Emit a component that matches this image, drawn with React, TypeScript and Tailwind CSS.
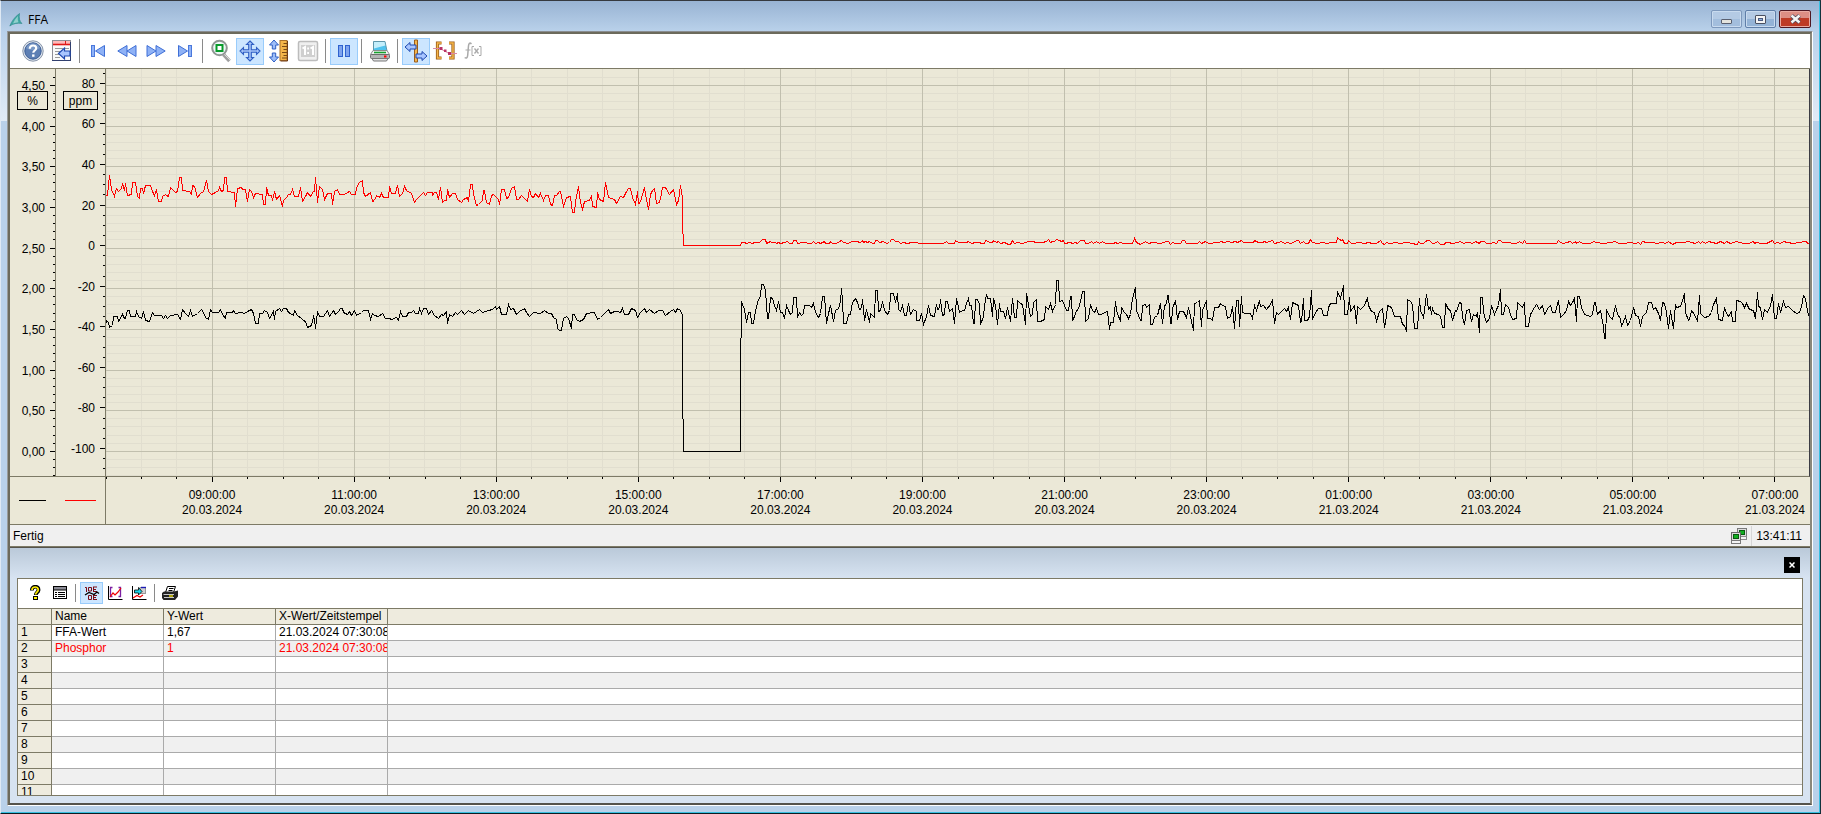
import React from "react";

/* ---------- trend data ---------- */

type Block = { x: number; y: number; sx: number; pts: string };

const toPoints = (blocks: Block[]) =>
  blocks
    .flatMap((b) =>
      b.pts
        .trim()
        .split(/\s+/)
        .map((p) => {
          const [px, py] = p.split(",").map(Number);
          return `${Math.floor(b.x + px / b.sx) + 0.5},${Math.floor(b.y + py / 3) + 0.5}`;
        }),
    )
    .join(" ");

const phosphor = toPoints([
  {
    x: -16,
    y: 81,
    sx: 2.528,
    pts: `40,136 45,136 50,75 54,118 61,139 64,124 68,115 72,124 80,115 83,100 87,121 91,100 95,136 104,132 107,97 115,97 119,139 124,145 128,115 132,115 136,130 141,106 153,106 157,124 164,136 169,118 174,154 180,154 184,139 190,133 193,136 199,139 203,112 208,118 215,127 222,124 227,82 232,82 234,121 251,124 256,133 260,106 264,108 273,142 279,131 287,124 295,91 300,124 308,133 318,127 325,121 328,112 332,124 337,121 340,82 345,82 347,124 365,127 369,170 373,115 382,112 385,118 393,118 397,154 402,118 408,124 414,142 418,130 436,133 439,163 443,163 447,112 452,136 458,136 462,151 467,124 472,148 480,136 486,170 490,151 498,142 503,133 508,133 513,118 518,139 528,139 533,112 538,154 546,139 550,127 557,139 564,124 567,124 570,82 576,157 581,109 589,118 593,148 600,130 610,130 614,163 618,124 626,118 631,133 643,133 656,124 661,133 670,133 674,112 681,97 688,91 691,127 697,139 708,127 713,154 720,151 725,136 733,142 738,130 742,142 754,142 758,109 762,130 773,130 778,106 783,139 790,130 795,109 800,121 812,130 821,157 826,148 842,127 847,136 854,127 865,127 867,136 871,127 876,127 880,148 886,112 891,157 896,151 901,151 905,118 909,142 916,130 925,130 930,148 938,157 945,148 955,142 958,154 963,103 967,103 970,133 976,166 983,163 992,151 995,121 998,121 1002,157 1009,163 1014,136 1021,133 1032,148 1036,163 1041,118 1049,118 1053,145 1058,142 1065,115 1073,109 1077,148 1084,148 1092,136 1105,154 1110,118 1115,139 1122,142 1126,130 1134,142 1138,130 1146,151 1151,136 1158,136 1164,163 1170,166 1174,136 1180,136 1186,124 1190,124 1197,169 1205,142 1215,139 1219,187 1225,187 1228,154 1235,109 1240,157 1246,178 1251,154 1262,151 1267,136 1271,169 1280,172 1284,127 1289,148 1299,154 1304,97 1311,142 1325,148 1332,160 1342,139 1348,142 1355,130 1362,115 1367,115 1372,142 1378,163 1383,124 1387,160 1391,157 1397,133 1403,112 1407,148 1411,178 1416,133 1423,121 1428,115 1433,160 1440,157 1446,130 1448,112 1456,112 1465,133 1475,118 1482,163 1487,151 1492,106 1497,145 1499,215`,
  },
  {
    x: 564,
    y: 111,
    sx: 3,
    pts: `40,196 211,196 214,187 224,187 230,190 238,187 246,190 252,187 268,186 276,178 287,178 290,190 300,184 305,187 316,187 320,190 326,187 330,190 344,187 352,184 358,190 368,190 371,181 379,181 383,190 396,187 423,190 429,184 435,190 445,187 452,190 462,184 466,190 477,190 482,184 486,190 500,190 515,181 520,187 535,190 545,184 563,184 567,187 572,187 576,181 580,187 586,184 592,187 598,184 606,190 614,190 617,181 622,181 627,187 640,184 648,190 658,187 663,178 671,178 676,184 684,184 690,190 700,187 712,190 725,187 740,187 748,190 760,189 775,190 820,190 829,184 834,190 852,190 857,181 864,187 890,187 896,184 903,189 915,187 927,187 935,190 943,190 947,181 960,186 967,186 971,181 978,187 985,184 990,190 1002,187 1014,192 1020,193 1026,181 1032,190 1042,187 1056,190 1076,184 1086,184 1100,187 1118,187 1128,184 1136,178 1142,187 1147,184 1154,184 1160,178 1168,181 1173,184 1179,181 1184,190`,
  },
  {
    x: 954,
    y: 151,
    sx: 3,
    pts: `30,66 36,70 45,66 52,70 60,61 72,61 76,69 86,70 93,64 100,69 110,64 118,69 126,64 136,70 160,70 166,66 172,70 180,67 190,70 214,70 219,66 224,56 229,68 240,72 257,64 264,69 276,67 300,69 320,65 325,64 331,73 338,66 345,70 362,69 366,61 372,61 378,70 413,70 417,64 424,70 430,68 436,64 444,70 474,68 484,65 490,67 505,64 515,68 525,65 532,68 543,61 550,67 580,67 584,61 594,66 606,66 612,63 620,67 636,61 642,69 654,66 665,64 674,70 682,67 690,70 700,66 708,61 716,62 722,69 730,64 736,70 746,70 752,58 758,67 772,70 790,66 800,69 815,67 828,66 833,52 838,57 843,62 848,58 854,70 862,70 866,62 874,70 886,70 890,66 896,68 912,70 925,66 938,69 950,69 960,61 968,70 974,73 980,67 988,70 1010,66 1018,69 1040,67 1060,70 1066,73 1071,73 1076,64 1082,69 1090,70 1096,64 1102,61 1109,61`,
  },
  {
    x: 1324,
    y: 151,
    sx: 3,
    pts: `0,64 6,69 14,69 22,64 32,72 42,73 46,68 56,66 68,69 82,67 92,64 100,70 110,66 118,66 126,70 136,65 148,70 152,64 164,64 170,70 182,70 190,66 198,70 206,62 211,62 216,67 225,68 260,70 268,65 276,69 282,61 288,70 380,69 385,61 392,66 400,70 410,67 420,65 428,69 435,64 440,69 448,64 458,70 480,70 490,65 500,67 520,70 540,67 555,64 565,69 580,70 600,67 615,70 625,66 630,73 636,64 650,68 670,66 680,69 698,66 706,70 715,65 728,73 740,68 760,66 775,64 785,67 796,70 806,64 812,70 818,64 826,70 836,64 848,68 858,70 872,64 882,70 890,64 900,70 920,65 940,69 955,70 970,64 974,70 980,66 994,69 1010,70 1026,61 1034,70 1042,66 1050,70 1060,64 1072,66 1090,70 1104,66 1128,64 1133,69 1138,69`,
  },
]);

const ffa = toPoints([
  {
    x: -16,
    y: 81,
    sx: 2.528,
    pts: `40,524 42,511 46,518 50,533 56,527 60,499 69,499 73,514 82,493 87,505 91,505 95,481 99,481 103,499 114,499 118,484 122,499 130,505 136,484 140,511 151,514 158,488 162,496 180,496 186,505 192,497 197,505 203,497 222,493 230,508 235,478 241,490 250,499 255,481 260,499 272,490 281,478 287,487 293,502 300,508 305,478 310,487 325,487 329,478 334,493 342,505 346,487 360,487 364,481 369,490 382,488 391,490 398,484 409,478 413,490 418,520 425,520 429,490 436,490 441,481 448,488 455,505 463,484 467,508 470,484 480,475 484,484 490,476 497,476 502,487 508,490 514,496 518,481 524,496 534,505 540,511 546,514 550,532 561,526 564,499 568,508 571,535 575,484 580,499 590,499 600,481 606,499 615,481 620,493 628,484 632,475 638,475 641,487 651,493 657,484 662,496 668,481 674,496 686,487 691,481 704,481 708,508 713,490 718,496 730,499 740,490 746,505 758,505 763,508 775,502 780,511 784,484 789,499 800,499 804,487 812,488 817,481 823,490 830,490 833,475 839,490 844,475 851,475 855,493 863,481 872,496 882,505 888,494 894,497 901,485 905,520 909,493 916,500 925,487 930,493 940,481 946,493 956,482 970,490 985,478 992,487 1008,481 1018,478 1024,469 1028,478 1036,469 1040,493 1054,493 1059,463 1064,478 1070,475 1078,493 1086,484 1098,475 1103,487 1110,499 1122,487 1140,490 1150,481 1158,490 1166,490 1172,502 1179,508 1183,535 1188,541 1193,541 1197,505 1204,499 1210,505 1216,535 1220,493 1226,493 1230,508 1238,514 1248,508 1254,490 1275,487 1284,508 1290,502 1300,490 1312,478 1317,490 1325,484 1334,484 1340,487 1345,475 1352,493 1362,493 1370,475 1378,481 1384,502 1392,487 1402,475 1408,487 1415,478 1428,490 1436,481 1448,481 1454,496`,
  },
  {
    x: 564,
    y: 111,
    sx: 3,
    pts: `0,394 10,388 16,396 22,386 30,392 37,405 38,610 40,814 211,814 212,588 214,365 218,374 223,388 230,428 234,398 241,398 245,430 250,430 256,390 264,358 270,349 275,313 280,313 285,332 291,415 294,415 301,352 306,356 314,376 320,390 326,364 332,396 338,398 344,415 350,376 356,390 362,403 368,396 371,352 379,352 383,411 388,398 394,406 400,400 404,377 418,377 424,382 429,370 436,396 444,412 452,400 458,349 463,349 468,431 475,400 482,376 489,425 495,390 504,384 510,364 515,325 518,360 521,430 530,430 534,404 541,402 546,366 556,355 561,366 568,388 573,386 576,358 582,422 588,388 598,428 602,400 612,412 617,331 621,331 625,394 631,390 636,364 642,390 652,403 658,390 662,341 670,341 675,366 681,341 686,388 690,393 696,376 702,406 710,406 714,370 720,404 730,388 738,394 740,421 748,421 753,400 759,434 768,410 774,376 780,406 792,409 798,374 803,388 808,386 812,358 818,406 823,402 826,364 832,364 838,394 846,386 852,431 858,355 864,380 868,396 876,390 884,390 890,370 894,355 898,376 904,376 909,430 913,430 916,358 922,358 928,374 932,433 940,408 944,376 948,343 953,355 960,355 966,410 971,355 976,376 981,433 988,370 992,394 1000,394 1005,415 1011,382 1020,425 1026,355 1032,412 1038,412 1043,360 1050,370 1058,374 1065,433 1070,341 1080,409 1086,402 1090,366 1099,358 1103,424 1112,424 1122,418 1127,379 1134,388 1142,370 1148,394 1156,372 1160,301 1165,301 1169,365 1177,361 1182,376 1190,392 1196,390`,
  },
  {
    x: 954,
    y: 151,
    sx: 3,
    pts: `30,230 34,230 38,300 44,290 50,272 56,268 61,245 68,214 73,214 77,304 86,296 92,254 96,272 102,278 108,264 114,284 124,284 132,276 142,274 148,328 152,308 160,306 165,244 170,272 180,304 185,262 192,278 200,284 206,296 212,284 218,235 225,202 230,272 240,300 244,300 248,256 256,252 260,262 268,254 272,313 277,313 283,292 292,286 300,250 306,310 312,256 318,252 321,226 326,226 330,310 334,310 338,266 345,240 352,298 358,274 370,274 378,292 384,262 392,290 399,331 404,250 412,248 418,242 423,319 428,270 438,242 442,295 452,296 457,301 462,262 474,262 480,250 486,256 496,260 502,295 510,290 516,258 522,325 528,242 535,242 538,320 543,230 548,276 556,279 570,279 576,295 582,256 590,272 597,242 602,260 610,256 618,268 630,254 636,238 642,310 648,276 656,284 672,266 678,274 684,262 690,298 697,246 708,252 715,256 720,307 724,305 729,236 734,301 742,300 748,290 753,212 758,298 766,278 774,266 784,266 790,286 802,286 806,262 812,250 828,250 833,214 842,235 849,196 854,283 862,283 867,233 872,274 882,256 888,310 893,260 900,268 908,262 914,256 921,232 926,256 934,274 942,276 950,304 958,274 968,264 973,322 978,290 981,256 994,262 1004,290 1020,288 1026,314 1033,316 1038,334 1043,238 1050,244 1058,254 1063,325 1072,325 1077,236 1082,270 1090,292 1098,223 1104,268`,
  },
  {
    x: 1324,
    y: 151,
    sx: 3,
    pts: `0,260 4,284 8,266 14,280 24,282 30,290 36,322 43,322 47,250 54,268 62,272 68,300 75,272 80,274 87,247 94,250 98,292 103,313 108,270 117,268 123,304 130,283 138,290 143,278 148,337 152,232 157,232 160,278 168,306 178,296 185,256 192,282 200,268 205,256 210,208 215,284 220,284 225,254 234,262 240,284 248,299 258,296 263,247 270,256 278,262 282,247 287,319 295,319 300,284 312,262 318,254 328,268 337,256 344,284 356,262 362,256 368,276 376,276 384,241 392,292 400,284 410,272 414,244 420,256 428,248 433,236 438,304 442,230 448,230 453,262 464,284 480,290 486,284 492,247 497,247 502,284 512,272 520,320 523,355 526,355 530,268 538,290 548,298 555,256 562,284 570,296 574,319 580,304 586,290 592,316 600,300 611,262 617,286 624,290 630,319 636,290 650,278 656,248 664,248 670,268 676,262 684,280 691,300 697,247 702,250 708,276 715,325 722,270 729,325 735,254 740,262 750,258 756,240 762,220 767,276 774,300 779,298 785,272 793,284 802,304 807,226 812,280 822,292 834,290 844,278 850,254 858,236 864,298 876,300 882,262 890,280 896,290 904,274 908,304 916,304 920,242 930,244 936,250 942,262 948,250 958,268 970,272 976,295 981,217 986,260 992,262 998,298 1004,268 1012,276 1020,256 1026,224 1034,295 1040,295 1046,250 1052,278 1059,244 1066,262 1076,260 1088,270 1098,280 1108,278 1114,258 1120,226 1126,235 1131,272 1136,286 1140,286`,
  },
]);

/* ---------- scales ---------- */

const PLOT_W = 1703;
const PLOT_H = 407;

const pct = (h: number) => `${(Math.max(h * 71 - 0.5, 0.5) / PLOT_W) * 100}%`;
const yPercent = (v: number) => Math.floor(382.4 - v * 81.34) + 0.5;
const yPpm = (v: number) => Math.floor(176.6 - v * 2.029) + 0.5;

const range = (n: number) => Array.from({ length: n }, (_, i) => i);
const percentTicks = range(50).map((i) => ({ y: yPercent((i - 3) / 10), major: (i - 3) % 5 === 0, v: (i - 3) / 10 }));
const ppmTicks = range(41).map((i) => ({ y: yPpm(i * 5 - 115), major: (i * 5 - 115) % 20 === 0, v: i * 5 - 115 }));
const hourTicks = range(48).map((i) => ({ h: i / 2, major: i % 4 === 3 }));

const xLabels = [
  ["09:00:00", "20.03.2024"],
  ["11:00:00", "20.03.2024"],
  ["13:00:00", "20.03.2024"],
  ["15:00:00", "20.03.2024"],
  ["17:00:00", "20.03.2024"],
  ["19:00:00", "20.03.2024"],
  ["21:00:00", "20.03.2024"],
  ["23:00:00", "20.03.2024"],
  ["01:00:00", "21.03.2024"],
  ["03:00:00", "21.03.2024"],
  ["05:00:00", "21.03.2024"],
  ["07:00:00", "21.03.2024"],
];

function Trend() {
  return (
    <div className="grid shrink-0 grid-cols-[46px_50px_minmax(0,1fr)] grid-rows-[408px_48px] bg-[#ebe8d7] text-xs">
      <svg className="block h-[408px] w-full border-r border-b border-[#7d7a66]" fontSize={12}>
        {percentTicks
          .filter((t) => t.y > 0 && t.y < PLOT_H)
          .map((t) => (
            <g key={t.v}>
              <line x1={t.major ? 40 : 43} x2={46} y1={t.y} y2={t.y} stroke="#000" shapeRendering="crispEdges" />
              {t.major && (
                <text x={35} y={t.y + 4} textAnchor="end">
                  {t.v.toFixed(2).replace(".", ",")}
                </text>
              )}
            </g>
          ))}
        <rect x={7.5} y={22.5} width={30} height={18} fill="#ebe8d7" stroke="#000" />
        <text x={22.5} y={36} textAnchor="middle">%</text>
      </svg>
      <svg className="block h-[408px] w-full border-r border-b border-[#7d7a66]" fontSize={12}>
        {ppmTicks
          .filter((t) => t.y > 0 && t.y < PLOT_H)
          .map((t) => (
            <g key={t.v}>
              <line x1={t.major ? 44 : 47} x2={50} y1={t.y} y2={t.y} stroke="#000" shapeRendering="crispEdges" />
              {t.major && (
                <text x={39} y={t.y + 4} textAnchor="end">
                  {t.v}
                </text>
              )}
            </g>
          ))}
        <rect x={7.5} y={22.5} width={34} height={18} fill="#ebe8d7" stroke="#000" />
        <text x={24.5} y={36} textAnchor="middle">ppm</text>
      </svg>
      <div className="border-r border-b border-r-[#3c3c44] border-b-[#7d7a66]">
        <svg className="block h-[407px] w-full" shapeRendering="crispEdges">
          {percentTicks.filter((t) => !t.major).map((t) => (
            <line key={t.v} x1="0" x2="100%" y1={t.y} y2={t.y} stroke="#e1decf" />
          ))}
          {hourTicks.filter((t) => !t.major).map((t) => (
            <line key={t.h} x1={pct(t.h)} x2={pct(t.h)} y1="0" y2="100%" stroke="#e1decf" />
          ))}
          {percentTicks.filter((t) => t.major).map((t) => (
            <line key={t.v} x1="0" x2="100%" y1={t.y} y2={t.y} stroke="#c1bfae" />
          ))}
          {hourTicks.filter((t) => t.major).map((t) => (
            <line key={t.h} x1={pct(t.h)} x2={pct(t.h)} y1="0" y2="100%" stroke="#c1bfae" />
          ))}
          <svg width="100%" height="100%" viewBox={`0 0 ${PLOT_W} ${PLOT_H}`} preserveAspectRatio="none">
            <polyline points={ffa} fill="none" stroke="#000" vectorEffect="non-scaling-stroke" />
            <polyline points={phosphor} fill="none" stroke="#f00" vectorEffect="non-scaling-stroke" />
          </svg>
        </svg>
      </div>
      <div className="col-span-2 flex items-center gap-[19px] border-r border-b border-[#7d7a66] pl-[9px]">
        <span className="h-px w-[27px] bg-black" />
        <span className="h-px w-[31px] bg-[#f00]" />
      </div>
      <svg className="block h-12 w-full border-b border-[#7d7a66]" fontSize={12}>
        {hourTicks.map((t) => (
          <line key={t.h} x1={pct(t.h)} x2={pct(t.h)} y1={0} y2={t.major ? 5 : 2} stroke="#000" shapeRendering="crispEdges" />
        ))}
        {xLabels.map(([time, date], i) => (
          <g key={i} textAnchor="middle">
            <text x={pct(1.5 + i * 2)} y={22}>{time}</text>
            <text x={pct(1.5 + i * 2)} y={37}>{date}</text>
          </g>
        ))}
      </svg>
    </div>
  );
}

/* ---------- toolbar icons ---------- */

const Ico = ({ children, s = 24 }: { children: React.ReactNode; s?: number }) => (
  <svg width={s} height={s} viewBox={`0 0 ${s} ${s}`} className="shrink-0" fill="none" aria-hidden="true">
    {children}
  </svg>
);

const BLUE = "#2f5fc4";
const LIGHT = "#8fb2f6";

const HelpIcon = () => (
  <Ico>
    <circle cx="12" cy="12" r="10.2" fill="#e4e9f0" stroke="#8593a8" />
    <circle cx="12" cy="12" r="8.2" fill="#5d7fb4" stroke="#3a5c94" />
    <path d="M5 9a7.5 7.5 0 0 1 14 0c-4 3-9 3-14 0z" fill="#86a2cd" opacity=".7" />
    <path d="M8.8 9.8c0-4.4 6.6-4.2 6.4-.6-.1 2.3-2.9 2.3-2.9 4.600" stroke="#fff" strokeWidth="2.2" />
    <rect x="11.1" y="15.4" width="2.4" height="2.4" fill="#fff" />
  </Ico>
);
const ConfigIcon = () => (
  <Ico>
    <rect x="2.5" y="1.5" width="18" height="20" fill="#fafafa" stroke="#8d8d96" />
    <path d="M2 21.5h19M20.5 3v18" stroke="#32406e" />
    <rect x="3" y="2" width="17" height="4" fill="#ffb9b9" />
    <path d="M3 5.500h17" stroke="#e01818" strokeWidth="1.6" />
    <path d="M15.500 2v3" stroke="#e01818" />
    <path d="M5 9.500h8M5 12.500h5M5 15.500h4M5 18.500h5M15 9.500h4" stroke="#9a9a9a" />
    <path d="M8.500 14.500l6-5.500v3h5.500v5h-5.500v3z" fill="#a9c6ff" stroke="#1f49b0" strokeWidth="1.2" />
  </Ico>
);
const FirstIcon = () => (
  <Ico>
    <rect x="5.5" y="6.5" width="3" height="11" fill={LIGHT} stroke="#4a78dc" />
    <path d="M18.5 6.5v11L9.5 12z" fill={LIGHT} stroke="#3f6fd6" />
  </Ico>
);
const BackIcon = () => (
  <Ico>
    <path d="M12 6.5v11L2.8 12zM21 6.5v11L12 12z" fill={LIGHT} stroke="#3f6fd6" />
  </Ico>
);
const ForwardIcon = () => (
  <Ico>
    <path d="M3 6.5v11L12 12zM12 6.5v11L21.2 12z" fill={LIGHT} stroke="#3f6fd6" />
  </Ico>
);
const LastIcon = () => (
  <Ico>
    <rect x="15.5" y="6.5" width="3" height="11" fill={LIGHT} stroke="#4a78dc" />
    <path d="M5.5 6.5v11L14.5 12z" fill={LIGHT} stroke="#3f6fd6" />
  </Ico>
);
const ZoomIcon = () => (
  <Ico>
    <path d="M14.5 15.5l6 6.5" stroke="#a0a0a0" strokeWidth="3.5" />
    <path d="M15 15l6 6" stroke="#dcdcdc" strokeWidth="1" />
    <circle cx="10.5" cy="9" r="7.3" fill="#eef8f6" stroke="#8f9694" strokeWidth="2" />
    <rect x="7.5" y="6" width="6" height="6" fill="#fff" stroke="#079a2b" strokeWidth="2" />
  </Ico>
);
const MoveIcon = () => (
  <Ico>
    <path
      d="M12 2l3.500 3.500h-2.200v5.200h5.200V8.500L22 12l-3.500 3.500v-2.200h-5.200v5.200h2.200L12 22l-3.500-3.500h2.200v-5.200H5.500v2.200L2 12l3.500-3.500v2.200h5.200V5.500H8.500z"
      fill="#a7c5f8"
      stroke={BLUE}
      strokeWidth="1.1"
    />
  </Ico>
);
const ScaleIcon = () => (
  <Ico>
    <path d="M7 1l4.500 5H8.700v4H5.300V6H2.500zM7 23L2.500 18h2.800v-4h3.400v4h2.800z" fill="#9dbdf8" stroke={BLUE} />
    <rect x="13" y="1.5" width="7" height="20" fill="#f4b54a" stroke="#a9702a" />
    <path d="M20.500 2v20H13.500" stroke="#6e3a14" />
    <path d="M16.500 4.500h4M15 7.500h5M16.500 10.500h4M15 13.500h5M16.500 16.500h4M15 19h5" stroke="#7a4a16" />
  </Ico>
);
const OneToOneIcon = () => (
  <Ico>
    <rect x="2.500" y="2.500" width="19" height="19" rx="1.500" fill="#efefef" stroke="#bcbcbc" strokeWidth="1.500" />
    <rect x="5" y="6" width="14" height="12" fill="#cfcfcf" />
    <path d="M6.500 9.500L9 8v8M14.500 9.500L17 8v8" stroke="#fff" strokeWidth="2" />
    <path d="M11.200 9.500h1.800M11.200 14h1.800" stroke="#fff" strokeWidth="1.800" />
  </Ico>
);
const PauseIcon = () => (
  <Ico>
    <rect x="6.500" y="6.500" width="4" height="11" fill="#7ea4ee" stroke="#2e62cf" />
    <rect x="13.500" y="6.500" width="4" height="11" fill="#7ea4ee" stroke="#2e62cf" />
  </Ico>
);
const PrinterIcon = () => (
  <Ico>
    <path d="M5.500 2.500h11.500l2 9.500H5.500z" fill="#4fc3ee" stroke="#5f97ab" />
    <path d="M6 3h10.500l.8 3.500L6 9.500z" fill="#c4eefb" />
    <path d="M5 11.500h14l2.500 4h-19z" fill="#f2f2f2" stroke="#8b8b8b" />
    <path d="M6 13.500h12" stroke="#17a22c" strokeWidth="1.600" />
    <rect x="2.500" y="15.500" width="19" height="4" rx="1" fill="#b4b4b4" stroke="#6d6d6d" />
    <path d="M4 19.500h16l-1.500 2.500h-13z" fill="#e2e2e2" stroke="#777" />
    <rect x="16" y="16.500" width="2.500" height="2" fill="#f00" />
  </Ico>
);
const RulerIcon = () => (
  <Ico>
    <path d="M10.500 1v22h3V1z" fill="#f3b54c" stroke="#9a5d1a" />
    <path d="M1 8l5-4.500v2.500h6v4H6v2.500z" fill="#a7c5ff" stroke="#1f49b0" />
    <path d="M23 17l-5-4.500V15h-6v4h6v2.500z" fill="#a7c5ff" stroke="#1f49b0" />
  </Ico>
);
const StatIcon = () => (
  <Ico>
    <path d="M8.500 4h-4v15h4M16 4h4v15h-4" stroke="#9a5d1a" strokeWidth="3.200" />
    <path d="M8.500 4h-4v15h4M16 4h4v15h-4" stroke="#f6b64a" strokeWidth="1.500" />
    <path d="M0 9.500h7l9 5h8" stroke="#d88aa4" />
    <rect x="6.500" y="8" width="3" height="3" fill="#b83266" />
    <rect x="11" y="10.500" width="2.500" height="2.500" fill="#b83266" />
    <rect x="15" y="13" width="3" height="3" fill="#b83266" />
  </Ico>
);
const IntegralIcon = () => (
  <Ico>
    <path d="M9.500 4.800c-1.800-1.500-2.800-.3-3 2l-.8 9.500c-.2 2.600-1.500 3.500-3 2.200" stroke="#a9a9a9" strokeWidth="1.500" />
    <path d="M3.500 11h5" stroke="#a9a9a9" />
    <path d="M12 7.500h-2v9h2M17 7.500h2v9h-2" stroke="#a9a9a9" />
    <path d="M12.500 9.500l4 5M16.500 9.500l-4 5" stroke="#a9a9a9" strokeWidth="1.300" />
  </Ico>
);

const SmallHelp = () => (
  <Ico s={16}>
    <path d="M3.800 5.500c0-5 7-5 6.700-.5-.2 2.500-2.700 2.500-2.700 5" stroke="#000" strokeWidth="3.800" />
    <path d="M4 5c0-4 6.400-4 6.200 0-.2 2.200-2.500 2.300-2.500 4.500" stroke="#ffee00" strokeWidth="1.700" />
    <rect x="5.500" y="11.500" width="4" height="3" fill="#ffee00" stroke="#000" />
  </Ico>
);
const SmallList = () => (
  <Ico s={16}>
    <rect x="1.500" y="1.500" width="13" height="12" fill="#fff" stroke="#000" />
    <rect x="2" y="2" width="12" height="3" fill="#8b8b95" />
    <path d="M1 5h14" stroke="#000" />
    <path d="M3 7.500h2M6 7.500h7M3 9.500h2M6 9.500h7M3 11.500h2M6 11.500h7" stroke="#000" />
  </Ico>
);
const SmallValues = () => (
  <Ico s={16}>
    <path d="M1 2.500h1.500V7M4.500 2.500h3V6h-3zM9 2h4M9.500 2v4.500M9 4.500h3M9 6.500h4" stroke="#7a0c16" />
    <path d="M4.500 10.500h3v4h-3zM9.500 10v5M9 10.500h4M9 12.500h3M9 14.500h4" stroke="#7a0c16" />
    <path d="M1 10l4-2.500 5 2 3-2.500 2 1.500" stroke="#000" strokeWidth="1.300" />
  </Ico>
);
const SmallStat = () => (
  <Ico s={16}>
    <path d="M1.500 1v13.500h14" stroke="#000" />
    <path d="M5.500 2.500h-2v9h2M11.500 2.500h2v9h-2" stroke="#7b1fa2" strokeWidth="1.300" />
    <path d="M3 12l3-4 2 2 3-3 3-4" stroke="#e00" strokeWidth="1.200" />
  </Ico>
);
const SmallExport = () => (
  <Ico s={16}>
    <path d="M1.500 1v13.500h14" stroke="#000" />
    <rect x="9" y="2.500" width="5.500" height="6" fill="#d0d0d0" stroke="#999" />
    <path d="M10 2.500h5" stroke="#1b1bb5" strokeWidth="1.400" />
    <path d="M3.500 5h4V2.500L11 6.500l-3.500 3.500V8h-4z" fill="#19d5e8" stroke="#000" strokeWidth=".8" />
    <path d="M2 13l4-2.500 3 1.500 3-2" stroke="#e00" strokeWidth="1.200" />
  </Ico>
);
const SmallPrinter = () => (
  <Ico s={16}>
    <path d="M5.500 1.500h8l-2 6h-8z" fill="#fff" stroke="#000" />
    <path d="M7 3.500h4.500M6.500 5.500h4" stroke="#000" />
    <path d="M0 8l2-1.500h10l4-1v6L13 15H1.500L0 13z" fill="#222" />
    <path d="M1.500 9.500h10.500M2 12.500h10" stroke="#c9c9c9" strokeWidth="1.200" />
    <path d="M7 11h4" stroke="#e8dc00" strokeWidth="1.400" />
  </Ico>
);

function ToolButton({ label, active, children }: { label: string; active?: boolean; children: React.ReactNode }) {
  return (
    <button
      type="button"
      aria-label={label}
      className={
        active
          ? "ml-px flex h-[27px] w-7 items-center justify-center border border-[#99ccfb] bg-[#cce6ff]"
          : "flex h-[27px] w-[29px] items-center justify-center"
      }
    >
      {children}
    </button>
  );
}

function SmallButton({ label, active, children }: { label: string; active?: boolean; children: React.ReactNode }) {
  return (
    <button
      type="button"
      aria-label={label}
      className={
        active
          ? "ml-px flex h-[22px] w-[23px] items-center justify-center border border-[#99ccfb] bg-[#cce6ff]"
          : "flex h-[22px] w-6 items-center justify-center"
      }
    >
      {children}
    </button>
  );
}

const Sep = () => <span className="mx-[3px] h-6 w-px bg-[#8a8a8a]" />;
const SmallSep = () => <span className="mx-[3px] h-[18px] w-px bg-[#8a8a8a]" />;

function Toolbar() {
  return (
    <div className="flex h-[35px] shrink-0 items-center border-b border-[#7d7a66] bg-white pl-2">
      <ToolButton label="Hilfe"><HelpIcon /></ToolButton>
      <ToolButton label="Konfiguration"><ConfigIcon /></ToolButton>
      <Sep />
      <ToolButton label="Erster Datensatz"><FirstIcon /></ToolButton>
      <ToolButton label="Zurück"><BackIcon /></ToolButton>
      <ToolButton label="Vor"><ForwardIcon /></ToolButton>
      <ToolButton label="Letzter Datensatz"><LastIcon /></ToolButton>
      <Sep />
      <ToolButton label="Zoom"><ZoomIcon /></ToolButton>
      <ToolButton label="Verschieben" active><MoveIcon /></ToolButton>
      <ToolButton label="Achsen skalieren"><ScaleIcon /></ToolButton>
      <ToolButton label="Originalansicht"><OneToOneIcon /></ToolButton>
      <Sep />
      <ToolButton label="Start/Stopp" active><PauseIcon /></ToolButton>
      <Sep />
      <ToolButton label="Drucken"><PrinterIcon /></ToolButton>
      <Sep />
      <ToolButton label="Lineal" active><RulerIcon /></ToolButton>
      <ToolButton label="Statistikbereich"><StatIcon /></ToolButton>
      <ToolButton label="Statistik berechnen"><IntegralIcon /></ToolButton>
    </div>
  );
}

function TitleBar() {
  return (
    <header className="flex h-[30px] shrink-0 items-start justify-between bg-linear-to-b from-[#98b3d3] to-[#b9d1ea] pr-2 pl-2">
      <div className="flex h-full items-center gap-[5px] pt-2">
        <svg width="14" height="14" viewBox="0 0 14 14" aria-hidden="true">
          <path d="M10.500.5C5.500 4 2.500 8.500.8 13 4 10.500 8.500 9.800 13 10.500 10.500 8.500 9.800 5 10.500.5z" fill="#3fa8a4" stroke="#2b8587" strokeWidth=".6" />
          <path d="M9 3C6.500 5.500 5 8 4 10.500c1.800-.8 3.500-1.200 5.500-1.300C8.700 7.500 8.600 5.500 9 3z" fill="#8fd0cc" />
        </svg>
        <h1 className="font-['Open_Sans',sans-serif] text-xs">FFA</h1>
      </div>
      <div className="flex gap-[3px] pt-[9px]">
        <button type="button" aria-label="Minimieren" className="flex h-[18px] w-[31px] items-center justify-center rounded-xs border border-[#7d98bc] bg-linear-to-b from-[#b4cae4] from-50% to-[#a3bedd] to-50% shadow-[inset_0_0_0_1px_#c9dbef]">
          <span className="mt-1 h-[5px] w-[11px] rounded-[1px] border border-[#5a6070] bg-[#e4e4de]" />
        </button>
        <button type="button" aria-label="Maximieren" className="flex h-[18px] w-[31px] items-center justify-center rounded-xs border border-[#5f7ea8] bg-linear-to-b from-[#b4cae4] from-50% to-[#94b3d6] to-50% shadow-[inset_0_0_0_1px_#c9dbef]">
          <span className="flex h-[9px] w-[11px] items-center justify-center rounded-[1px] border border-[#4a5060] bg-[#f4f4f4]">
            <span className="h-[3px] w-[5px] border border-[#4a5a80] bg-[#8fb0da]" />
          </span>
        </button>
        <button type="button" aria-label="Schließen" className="flex h-[18px] w-8 items-center justify-center rounded-xs border border-[#4f1722] bg-linear-to-b from-[#dd8e84] from-45% to-[#bd3a25] to-45% shadow-[inset_0_0_0_1px_#e8aaa2]">
          <svg width="13" height="10" viewBox="0 0 13 10" aria-hidden="true">
            <path d="M2.5 1.5l8 7M10.5 1.5l-8 7" stroke="#4c4a5c" strokeWidth="4" />
            <path d="M2.5 1.5l8 7M10.5 1.5l-8 7" stroke="#f4f4f4" strokeWidth="2.4" />
          </svg>
        </button>
      </div>
    </header>
  );
}

function StatusBar() {
  return (
    <footer className="flex h-[22px] shrink-0 items-center justify-between border-b border-[#7d7a66] bg-[#f0f0f0] pl-[3px] text-xs">
      <span>Fertig</span>
      <div className="flex h-full items-center gap-1 pr-2">
        <svg width="16" height="16" viewBox="0 0 16 16" aria-hidden="true">
          <rect x="6.500" y=".5" width="9" height="8" fill="#dcdcdc" stroke="#7a7a7a" />
          <rect x="8.500" y="2.500" width="5" height="4" fill="#10b020" stroke="#0a5a10" />
          <rect x="7.500" y="8.500" width="8" height="3" fill="#f4f4f4" stroke="#8a8a8a" />
          <rect x=".5" y="4.500" width="9" height="8" fill="#dcdcdc" stroke="#6a6a6a" />
          <rect x="2.500" y="6.500" width="5" height="4" fill="#10b020" stroke="#0a5a10" />
          <rect x=".5" y="12.500" width="9" height="3" fill="#f4f4f4" stroke="#7a7a7a" />
        </svg>
        <span className="h-5 w-px bg-[#d6d6d6]" />
        <span>13:41:11</span>
      </div>
    </footer>
  );
}

const rows: { name: string; y: string; x: string; red?: boolean }[] = [
  { name: "FFA-Wert", y: "1,67", x: "21.03.2024 07:30:08" },
  { name: "Phosphor", y: "1", x: "21.03.2024 07:30:08", red: true },
  ...range(9).map(() => ({ name: "", y: "", x: "" })),
];

function ValueTable() {
  const head = "h-4 overflow-hidden border-r border-b border-[#7d7a66] bg-[#eeebde] p-0 pl-[3px] text-left font-normal whitespace-nowrap";
  const cell = "h-4 overflow-hidden border-r border-b border-[#aaaaaa] p-0 pl-[3px] whitespace-nowrap";
  return (
    <table className="w-full table-fixed border-separate border-spacing-0 text-xs leading-[15px]">
      <colgroup>
        <col className="w-[34px]" />
        <col className="w-28" />
        <col className="w-28" />
        <col className="w-28" />
        <col />
      </colgroup>
      <thead>
        <tr>
          <th className={head} />
          <th className={head}>Name</th>
          <th className={head}>Y-Wert</th>
          <th className={head}>X-Wert/Zeitstempel</th>
          <th className="border-b border-[#7d7a66] bg-[#eeebde] p-0" />
        </tr>
      </thead>
      <tbody>
        {rows.map((r, i) => (
          <tr key={i} className={(i % 2 ? "bg-[#f0f0f0] " : "bg-white ") + (r.red ? "text-[#ff0000]" : "text-black")}>
            <th scope="row" className="h-4 border-r border-b border-[#7d7a66] bg-[#eeebde] p-0 pl-[3px] text-left font-normal text-black">
              {i + 1}
            </th>
            <td className={cell}>{r.name}</td>
            <td className={cell}>{r.y}</td>
            <td className={cell}>{r.x}</td>
            <td className="border-b border-[#aaaaaa] p-0" />
          </tr>
        ))}
      </tbody>
    </table>
  );
}

function ValuePanel() {
  return (
    <section className="flex min-h-0 flex-1 flex-col border-t border-[#55534c] bg-[#d7e3f1]">
      <div className="flex h-[30px] shrink-0 items-center justify-end bg-linear-to-b from-[#bac9d9] to-[#d7e3f1] pr-[10px]">
        <button type="button" aria-label="Fenster schließen" className="mt-1 flex size-4 items-center justify-center bg-black">
          <svg width="6" height="6" viewBox="0 0 6 6" aria-hidden="true">
            <path d="M.5.5l5 5M5.5.5l-5 5" stroke="#fff" strokeWidth="1.5" />
          </svg>
        </button>
      </div>
      <div className="mx-[7px] mb-[7px] flex min-h-0 flex-1 flex-col border border-[#7d7a66] bg-white">
        <div className="flex h-[30px] shrink-0 items-center border-b border-[#7d7a66] pb-[2px] pl-[6px]">
          <SmallButton label="Hilfe"><SmallHelp /></SmallButton>
          <SmallButton label="Konfiguration"><SmallList /></SmallButton>
          <SmallSep />
          <SmallButton label="Linealwerte" active><SmallValues /></SmallButton>
          <SmallButton label="Statistik"><SmallStat /></SmallButton>
          <SmallButton label="Export"><SmallExport /></SmallButton>
          <SmallSep />
          <SmallButton label="Drucken"><SmallPrinter /></SmallButton>
        </div>
        <div className="min-h-0 flex-1 overflow-hidden">
          <ValueTable />
        </div>
      </div>
    </section>
  );
}

export default function App() {
  return (
    <div className="flex h-screen flex-col overflow-hidden border border-t-[#35393f] border-r-[#12323c] border-b-[#0b1c22] border-l-[#dfe9f4] bg-[#b9d1ea] font-['Liberation_Sans',Arial,sans-serif] text-black">
      <div className="flex min-h-0 flex-1 flex-col border-r border-b border-[#38bfe0]">
        <TitleBar />
        <div className="flex min-h-0 flex-1 bg-linear-to-b from-[#b9d1ea] to-[#e1ebf6] bg-[length:100%_90px] bg-no-repeat px-[6px] pb-[6px]">
          <div className="flex min-h-0 min-w-0 flex-1 flex-col border border-t-[#8a8d90] border-r-white border-b-white border-l-[#9a9c9c]">
            <main className="flex min-h-0 flex-1 flex-col border-2 border-t-[#6c6a5c] border-r-[#8a887c] border-b-[#55534c] border-l-[#6c6a5c]">
              <Toolbar />
              <Trend />
              <StatusBar />
              <ValuePanel />
            </main>
          </div>
        </div>
      </div>
    </div>
  );
}
